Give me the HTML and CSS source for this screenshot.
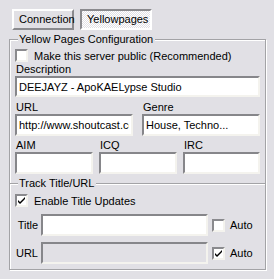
FILE: index.html
```html
<!DOCTYPE html>
<html lang="en">
<head>
  <meta charset="UTF-8">
  <title>Yellowpages</title>
  <link rel="stylesheet" href="styles.css">
</head>
<body>
  <div class="page">
    <div class="tabs">
      <div class="tab">Connection</div>
      <div class="tab tab-active">Yellowpages</div>
    </div>

    <div class="group group-yp">
      <div class="group-title">Yellow Pages Configuration</div>
      <div class="check">
        <span class="box"></span>
        <span>Make this server public (Recommended)</span>
      </div>
      <div class="label">Description</div>
      <input class="input" type="text" value="DEEJAYZ - ApoKAELypse Studio">
      <div class="fields fields-2">
        <div>
          <div class="label">URL</div>
          <input class="input" type="text" value="http://www.shoutcast.com">
        </div>
        <div>
          <div class="label">Genre</div>
          <input class="input" type="text" value="House, Techno...">
        </div>
      </div>
      <div class="fields fields-3">
        <div>
          <div class="label">AIM</div>
          <input class="input" type="text" value="">
        </div>
        <div>
          <div class="label">ICQ</div>
          <input class="input" type="text" value="">
        </div>
        <div>
          <div class="label">IRC</div>
          <input class="input" type="text" value="">
        </div>
      </div>
    </div>

    <div class="group group-track">
      <div class="group-title">Track Title/URL</div>
      <div class="check check-updates">
        <span class="box"><svg width="9" height="9" viewBox="0 0 9 9"><path d="M1 4 L3 6 L8 1 L8 3 L3 8 L1 6 Z" fill="#000"/></svg></span>
        <span>Enable Title Updates</span>
      </div>
      <div class="track-row">
        <span class="track-label">Title</span>
        <input class="input" type="text" value="">
        <div class="check check-auto">
          <span class="box"></span>
          <span>Auto</span>
        </div>
      </div>
      <div class="track-row">
        <span class="track-label">URL</span>
        <input class="input input-off" type="text" value="" disabled>
        <div class="check check-auto">
          <span class="box"><svg width="9" height="9" viewBox="0 0 9 9"><path d="M1 4 L3 6 L8 1 L8 3 L3 8 L1 6 Z" fill="#000"/></svg></span>
          <span>Auto</span>
        </div>
      </div>
    </div>
  </div>
</body>
</html>
```

FILE: styles.css
```css
body {
  margin: 0;
  background: #e1e0e5;
  font-family: "Liberation Sans", Arial, sans-serif;
  font-size: 11px;
  color: #000;
}
.page {
  width: 274px;
  height: 279px;
  padding: 9px 0 0 9px;
  box-sizing: border-box;
}
.tabs {
  display: flex;
  gap: 6px;
  margin-left: 3px;
}
.tab {
  height: 21px;
  box-sizing: border-box;
  padding: 0 5px;
  line-height: 17px;
  border: 2px solid;
  border-color: #fff #8a8a8e #8a8a8e #fff;
  text-align: center;
}
.tab:first-child {
  width: 62px;
}
.tab-active {
  width: 72px;
  border-color: #8a8a8e #fff #fff #8a8a8e;
  background: repeating-conic-gradient(#fff 0 25%, #e1e0e5 0 50%) 0 0 / 2px 2px;
}
.group {
  width: 257px;
  box-sizing: border-box;
  border: 1px solid #a3a3a6;
  box-shadow: inset 1px 1px #fff, 1px 1px #fff;
  padding: 0 5px;
}
.group-yp {
  margin-top: 9px;
  padding-bottom: 9px;
}
.group-track {
  margin-top: -1px;
  padding-bottom: 5px;
}
.group-title {
  display: table;
  margin: -7px 0 0 3px;
  padding: 0 2px 0 1px;
  line-height: 13px;
  background: #e1e0e5;
}
.check {
  display: flex;
  align-items: center;
  gap: 6px;
  height: 15px;
  margin-top: 2px;
}
.check-updates {
  margin-top: 3px;
}
.box {
  width: 13px;
  height: 13px;
  box-sizing: border-box;
  border: 2px solid;
  border-color: #8a8a8e #f4f3ee #f4f3ee #8a8a8e;
  background: #fff;
  display: flex;
  align-items: center;
  justify-content: center;
  flex: none;
}
.label {
  line-height: 13px;
  padding-left: 1px;
}
.input {
  display: block;
  width: 100%;
  height: 21px;
  box-sizing: border-box;
  margin: 0;
  padding: 0 2px;
  border: 2px solid;
  border-color: #86868a #f4f3ee #f4f3ee #86868a;
  background: #fff;
  font: inherit;
  color: #000;
  outline: none;
}
.input-off {
  background: #e1e0e5;
}
.fields {
  display: grid;
  margin-top: 4px;
}
.fields .input {
  height: 22px;
}
.fields-2 {
  grid-template-columns: 118px 118px;
  gap: 9px;
}
.fields-3 {
  grid-template-columns: 78px 78px 77px;
  gap: 6px;
  margin-top: 3px;
}
.track-row {
  display: flex;
  align-items: center;
  margin-top: 6px;
}
.track-label {
  width: 23px;
  text-align: right;
  margin-right: 3px;
  flex: none;
}
.track-row .input {
  width: 167px;
  height: 22px;
}
.check-auto {
  margin: 0 0 0 4px;
  gap: 5px;
}
```
